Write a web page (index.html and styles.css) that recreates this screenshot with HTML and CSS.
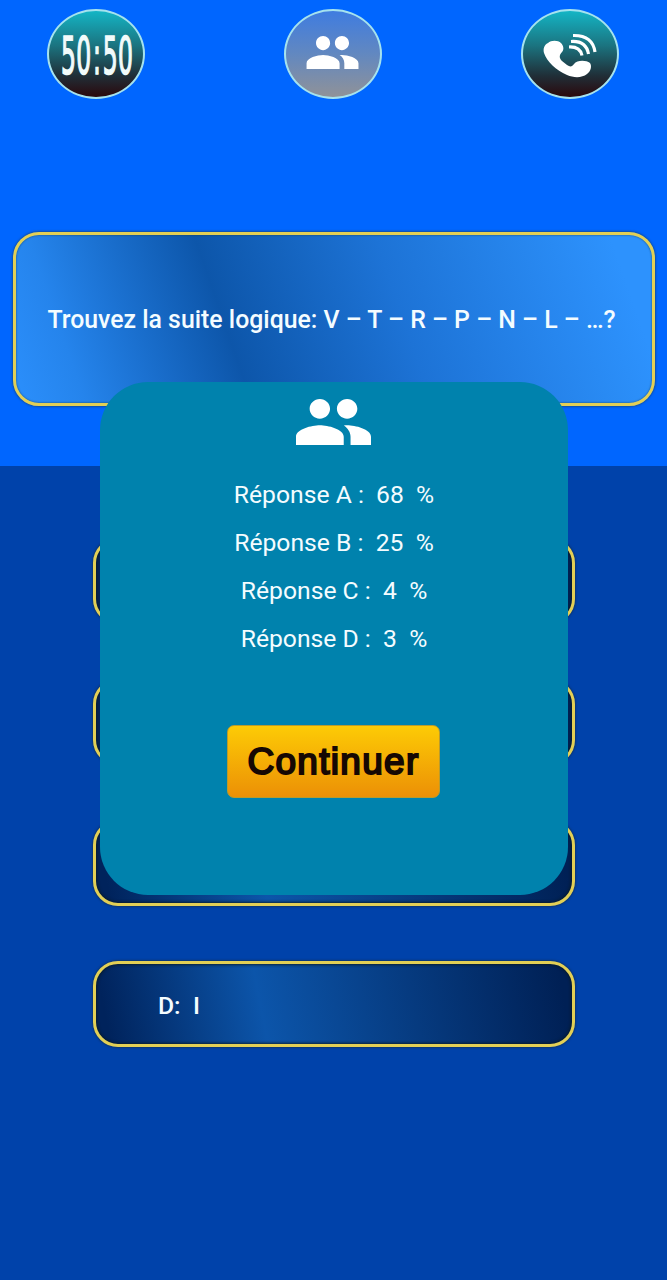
FILE: index.html
```
<!DOCTYPE html>
<html lang="fr">
<head>
  <meta charset="UTF-8" />
  <meta name="viewport" content="width=device-width, initial-scale=1.0"/>
  <title>Quiz</title>
  <link rel="stylesheet" href="styles.css">
</head>
<body>
  <div class="game">
    <div class="top">
      <div class="jokers">
        <button class="joker">
          <svg viewBox="0 0 98 90">
            <text class="fifty" transform="translate(0 65) scale(0.46 1)" x="30.5 63.5 100 121 154.5">50:50</text>
          </svg>
        </button>
        <button class="joker used">
          <svg viewBox="0 0 98 90">
            <g transform="translate(20.2 15.2) scale(2.36)">
              <path d="M16 11c1.66 0 2.99-1.34 2.99-3S17.66 5 16 5s-3 1.34-3 3 1.34 3 3 3zm-8 0c1.66 0 2.99-1.34 2.99-3S9.66 5 8 5 5 6.34 5 8s1.34 3 3 3zm0 2c-2.33 0-7 1.17-7 3.5V19h14v-2.5c0-2.33-4.67-3.5-7-3.5zm8 0c-.29 0-.62.02-.97.05C16.19 13.89 17 15.02 17 16.5V19h6v-2.5c0-2.33-4.67-3.5-7-3.5z"/>
            </g>
          </svg>
        </button>
        <button class="joker">
          <svg viewBox="0 0 98 90">
            <path d="M27 34 C30 31 37 31 40 34 C43 37 43 41 41 43 C38 46 38 49 41 52 L46 56 C49 58 51 58 53 55 C56 51 65 51 69 54 C71 57 70 62 66 65 C61 69 53 69 46 66 C35 61 26 53 23 44 C22 40 23 36 27 34 Z"/>
            <path class="wave" d="M48 38 Q59 37.5 61 46.500"/>
            <path class="wave" d="M50 32.500 Q65 31.5 67.500 45"/>
            <path class="wave" d="M52 26.500 Q71.500 26 74 43"/>
          </svg>
        </button>
      </div>
      <div class="question">Trouvez la suite logique: V – T – R – P – N – L – …?</div>
    </div>

    <div class="answers">
      <div class="answer"></div>
      <div class="answer"></div>
      <div class="answer"></div>
      <div class="answer">D:&nbsp; I</div>
    </div>

    <!-- audience vote popup -->
    <div class="popup">
      <svg class="popup-icon" viewBox="1 5 22 14" preserveAspectRatio="none">
        <path d="M16 11c1.66 0 2.99-1.34 2.99-3S17.66 5 16 5s-3 1.34-3 3 1.34 3 3 3zm-8 0c1.66 0 2.99-1.34 2.99-3S9.66 5 8 5 5 6.34 5 8s1.34 3 3 3zm0 2c-2.33 0-7 1.17-7 3.5V19h14v-2.5c0-2.33-4.67-3.5-7-3.5zm8 0c-.29 0-.62.02-.97.05C16.19 13.89 17 15.02 17 16.5V19h6v-2.5c0-2.33-4.67-3.5-7-3.5z"/>
      </svg>
      <ul class="votes">
        <li>Réponse A :&nbsp; 68&nbsp; %</li>
        <li>Réponse B :&nbsp; 25&nbsp; %</li>
        <li>Réponse C :&nbsp; 4&nbsp; %</li>
        <li>Réponse D :&nbsp; 3&nbsp; %</li>
      </ul>
      <button class="continue">Continuer</button>
    </div>
  </div>
</body>
</html>
```
FILE: styles.css
```
* {
  margin: 0;
  padding: 0;
  box-sizing: border-box;
}

body {
  background-color: #0042aa;
  font-family: Roboto, "Liberation Sans", sans-serif;
  color: #f4fcff;
}

.game {
  position: relative;
  width: 667px;
  height: 1280px;
  overflow: hidden;
}

.top {
  height: 466px;
  padding: 9px 12px 0 13px;
  background-color: #0066ff;
}

/* Jokers */
.jokers {
  display: flex;
  justify-content: space-between;
  padding: 0 36px 0 34px;
  margin-bottom: 133px;
}

.joker {
  width: 98px;
  height: 90px;
  border: 2px solid #a5e2ee;
  border-radius: 50%;
  background: linear-gradient(#14b5c5 0%, #1b7480 40%, #202f38 75%, #2b080c 100%);
  overflow: hidden;
}

.joker svg {
  display: block;
  width: 98px;
  height: 90px;
  margin: -2px;
  fill: #fff;
}

.joker.used {
  background: linear-gradient(#3f7ce0, #6288c0 50%, #909298);
}

.fifty {
  font-family: "DejaVu Sans", sans-serif;
  font-size: 51px;
  fill: #f2fbfb;
  stroke: #f2fbfb;
  stroke-width: 1.6;
}

.joker .wave {
  fill: none;
  stroke: #fff;
  stroke-width: 3.2;
}

/* Question and answers */
.question {
  display: flex;
  align-items: center;
  justify-content: center;
  height: 174px;
  padding-right: 5px;
  border: 3px solid #e2cf55;
  border-radius: 26px;
  box-shadow: 0 0 2px 1px rgba(30, 55, 70, 0.5), inset 0 0 2px rgba(20, 50, 60, 0.8);
  background: linear-gradient(71deg, #2b8ffc 0%, #2584ec 10%, #0d56aa 34%, #1d73d6 60%, #2d92fd 94%);
  font-size: 24.85px;
  font-weight: 500;
  white-space: nowrap;
}

.answers {
  display: flex;
  flex-direction: column;
  align-items: center;
  gap: 55px;
  padding: 72px 0 0 1px;
}

.answer {
  display: flex;
  align-items: center;
  width: 482px;
  height: 86px;
  padding: 3px 0 0 62px;
  border: 3px solid #e2cf55;
  border-radius: 25px;
  box-shadow: 0 0 2px 1px rgba(20, 45, 70, 0.6), inset 0 0 3px 1px rgba(10, 25, 30, 0.8);
  background: linear-gradient(79deg, #00235c 3%, #0c55aa 35%, #002055 97%);
  font-size: 24.7px;
  font-weight: 500;
}

/* Popup */
.popup {
  position: absolute;
  top: 382px;
  left: 100px;
  display: flex;
  flex-direction: column;
  align-items: center;
  width: 468px;
  height: 513px;
  padding: 17px 1px 0 0;
  border-radius: 48px;
  background-color: #0082ad;
}

.popup-icon {
  width: 75px;
  height: 46px;
  fill: #fff;
}

.votes {
  margin-top: 26px;
  padding-left: 1px;
  list-style: none;
  text-align: center;
  font-size: 24.7px;
  line-height: 48px;
}

.continue {
  width: 213px;
  height: 73px;
  margin-top: 62px;
  border: 1px solid #b99b2c;
  border-radius: 7px;
  background: linear-gradient(#fdcb05, #ec9006);
  font-family: "Liberation Sans", sans-serif;
  font-size: 37px;
  letter-spacing: 1.3px;
  color: #160803;
  -webkit-text-stroke: 2px #160803;
  stroke-linejoin: round;
}
```
